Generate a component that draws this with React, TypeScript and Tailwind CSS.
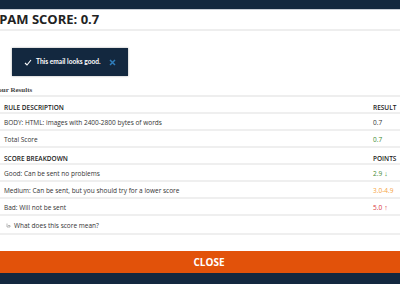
import React from "react";

type Row = { label: string; value?: string; color?: string; arrow?: "up" | "down" };

const breakdown: Row[] = [
  { label: "Good: Can be sent no problems", value: "2.9", color: "text-[#3f8a2f]", arrow: "down" },
  { label: "Medium: Can be sent, but you should try for a lower score", value: "3.0-4.9", color: "text-[#f6a441]" },
  { label: "Bad: Will not be sent", value: "5.0", color: "text-[#d8353c]", arrow: "up" },
];

function HeaderRow({ left, right }: { left: string; right: string }) {
  return (
    <div className="h-[17px] flex items-center pt-[6px] border-b-2 border-[#efefef] text-[6.5px] font-semibold text-[#222] uppercase shrink-0">
      <span className="pl-[4px] flex-1">{left}</span>
      <span className="w-[27px]">{right}</span>
    </div>
  );
}

function DataRow({ label, value, color, arrow }: Row) {
  return (
    <div className="h-[17px] flex items-center pt-[2px] border-b-2 border-[#efefef] text-[6.5px] text-[#333] shrink-0">
      <span className="pl-[4px] flex-1">{label}</span>
      <span className={`w-[27px] flex items-center gap-[2px] ${color ?? "text-[#333]"}`}>
        {value}
        {arrow === "down" && <span className="text-[7px] leading-none">↓</span>}
        {arrow === "up" && <span className="text-[7px] leading-none">↑</span>}
      </span>
    </div>
  );
}

export default function App() {
  return (
    <div className="w-[400px] h-[284px] overflow-hidden bg-white flex flex-col font-['Open_Sans',sans-serif]">
      {/* top navy strip */}
      <div className="h-[10px] bg-[#13283f] border-b border-[#c9ced6] shrink-0" />

      {/* title */}
      <div className="h-[21px] flex items-center border-b-2 border-[#eeeeee] shrink-0">
        <span className="ml-[-8px] text-[13px] font-bold text-[#222] leading-none">SPAM SCORE: 0.7</span>
      </div>

      {/* toast */}
      <div className="pt-[17px] pl-[12px] shrink-0">
        <div className="w-[116px] h-[28px] bg-[#13283f] shadow-[0_0_2px_rgba(0,0,0,0.35)] flex items-center pl-[12px] gap-[4px]">
          <svg width="8" height="7" viewBox="0 0 8 7" fill="none">
            <path d="M1 4 L3 6 L7 1" stroke="#fff" strokeWidth="1.1" />
          </svg>
          <span className="text-white font-bold text-[6.6px] font-['Lato',sans-serif]">This email looks good.</span>
          <svg width="7" height="7" viewBox="0 0 7 7" className="ml-[4px]">
            <path d="M1 1 L6 6 M6 1 L1 6" stroke="#2f7dbb" strokeWidth="1.5" />
          </svg>
        </div>
      </div>

      {/* section title */}
      <div className="h-[21px] flex items-end pb-[1px] border-b-2 border-[#eeeeee] shrink-0">
        <span className="ml-[-6px] font-['Liberation_Serif',serif] font-bold text-[7px] leading-none text-[#444]">Your Results</span>
      </div>

      {/* results table */}
      <HeaderRow left="Rule Description" right="Result" />
      <DataRow label="BODY: HTML: images with 2400-2800 bytes of words" value="0.7" />
      <DataRow label="Total Score" value="0.7" color="text-[#3f8a2f]" />

      <HeaderRow left="Score Breakdown" right="Points" />
      {breakdown.map((r) => (
        <DataRow key={r.label} {...r} />
      ))}

      <div className="h-[19px] flex items-center pt-[2px] border-b-2 border-[#efefef] text-[6.5px] text-[#333] pl-[6px] gap-[3px] shrink-0">
        <svg width="5" height="5" viewBox="0 0 5 5">
          <path d="M1 0.5 V4 H4 V2.5 H2" stroke="#9a9a9a" strokeWidth="0.7" fill="none" />
        </svg>
        <span>What does this score mean?</span>
      </div>

      <div className="flex-1" />

      {/* close button */}
      <div className="h-[22px] bg-[#e2520a] flex items-center justify-center shrink-0">
        <span className="text-white font-bold text-[10px] ml-[18px]">CLOSE</span>
      </div>
      <div className="h-[11px] bg-[#13283f] shrink-0" />
    </div>
  );
}
